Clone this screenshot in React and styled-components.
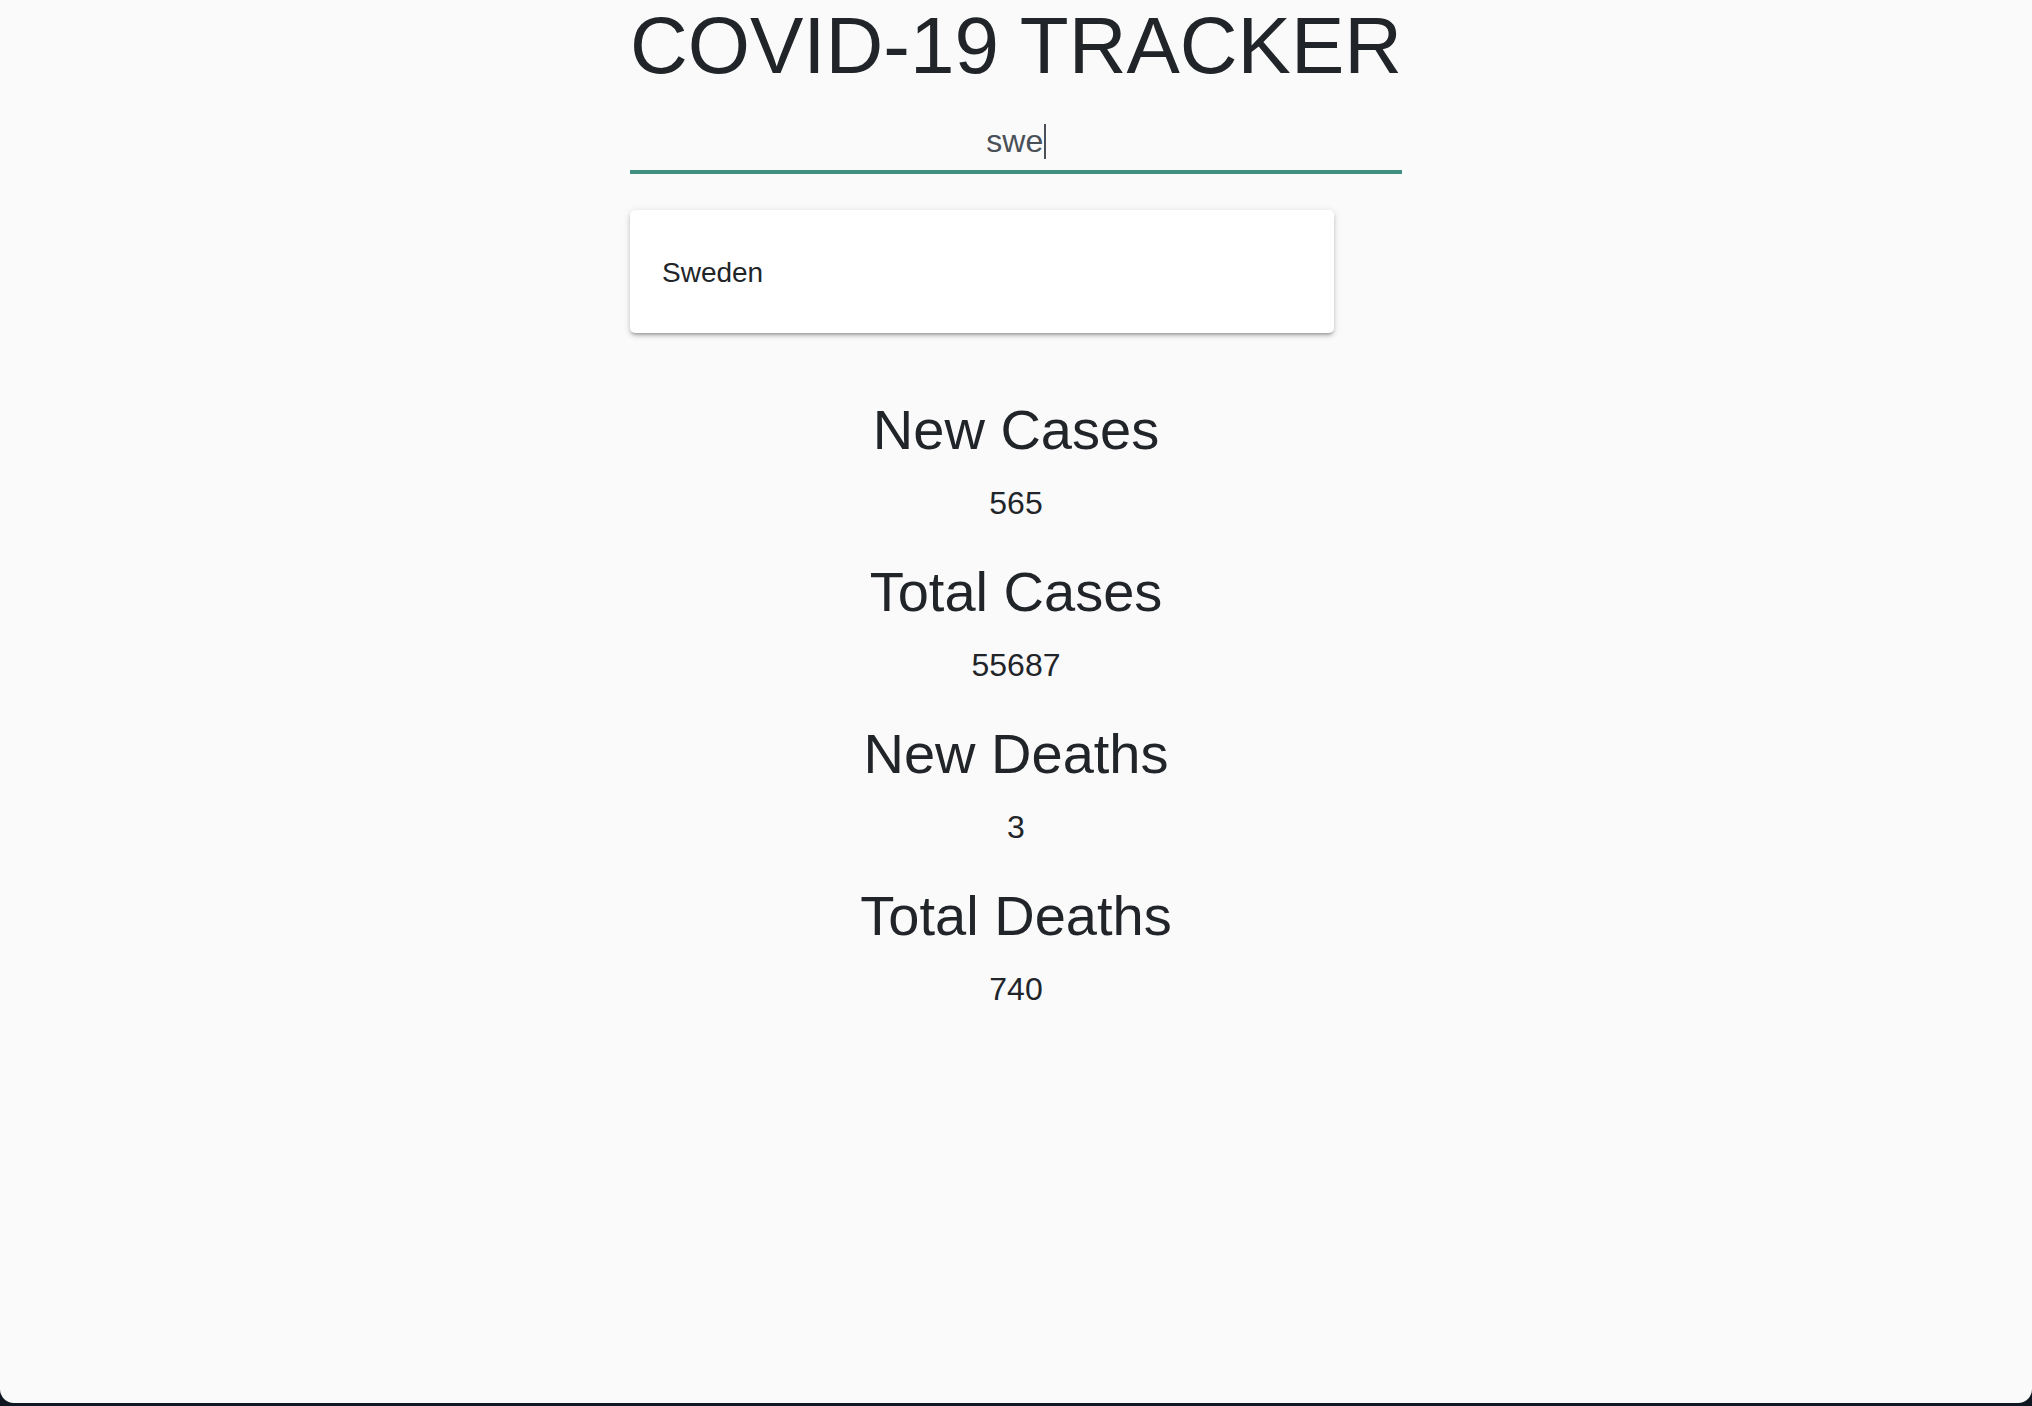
import React from 'react';
import styled, { createGlobalStyle } from 'styled-components';

const GlobalStyle = createGlobalStyle`
  html, body {
    margin: 0;
    padding: 0;
    background: #0f1822;
  }
  body {
    font-family: "Liberation Sans", Arial, Helvetica, sans-serif;
    color: #212529;
  }
`;

const Page = styled.div`
  min-height: calc(100vh - 3px);
  box-sizing: border-box;
  background: #fafafa;
  border-radius: 0 0 14px 14px;
  padding-top: 6px;
  display: flex;
  flex-direction: column;
  align-items: center;
`;

const Tracker = styled.div`
  width: 772px;
  display: flex;
  flex-direction: column;
  align-items: stretch;
`;

const Title = styled.h1`
  margin: 0;
  font-size: 80px;
  line-height: 80px;
  font-weight: 400;
  text-align: center;
  white-space: nowrap;
  color: #212529;
`;

const SearchField = styled.div`
  margin-top: 35px;
  padding-bottom: 9px;
  border-bottom: 4px solid #3f9080;
  font-size: 32px;
  line-height: 40px;
  text-align: center;
  color: #495057;
`;

const Caret = styled.span`
  display: inline-block;
  width: 1.5px;
  height: 35px;
  margin-left: 1px;
  vertical-align: -7px;
  background: #495057;
`;

const Suggestions = styled.ul`
  list-style: none;
  margin: 36px 0 0;
  padding: 0;
  width: 704px;
  background: #ffffff;
  border-radius: 5px;
  box-shadow: 0px 3px 3px -2px rgba(0, 0, 0, 0.25),
    0px 3px 4px 0px rgba(0, 0, 0, 0.16), 0px 1px 8px 0px rgba(0, 0, 0, 0.1);
`;

const Option = styled.li`
  height: 123px;
  box-sizing: border-box;
  display: flex;
  align-items: center;
  padding: 3px 32px 0;
  font-size: 28px;
  color: #212529;
`;

const Stats = styled.section`
  margin-top: 63px;
  display: flex;
  flex-direction: column;
  align-items: center;
  gap: 35px;
`;

const Stat = styled.div`
  display: flex;
  flex-direction: column;
  align-items: center;
`;

const StatLabel = styled.h2`
  margin: 0;
  font-size: 56px;
  line-height: 68px;
  font-weight: 400;
  color: #212529;
`;

const StatValue = styled.p`
  margin: 19px 0 0;
  font-size: 32px;
  line-height: 40px;
  color: #212529;
`;

const stats = [
  { label: 'New Cases', value: 565 },
  { label: 'Total Cases', value: 55687 },
  { label: 'New Deaths', value: 3 },
  { label: 'Total Deaths', value: 740 },
];

const App = () => {
  return (
    <>
      <GlobalStyle />
      <Page>
        <Tracker>
          <Title>COVID-19 TRACKER</Title>
          <SearchField>
            swe
            <Caret />
          </SearchField>
          <Suggestions>
            <Option>Sweden</Option>
          </Suggestions>
        </Tracker>
        <Stats>
          {stats.map((s) => (
            <Stat key={s.label}>
              <StatLabel>{s.label}</StatLabel>
              <StatValue>{s.value}</StatValue>
            </Stat>
          ))}
        </Stats>
      </Page>
    </>
  );
};

export default App;
